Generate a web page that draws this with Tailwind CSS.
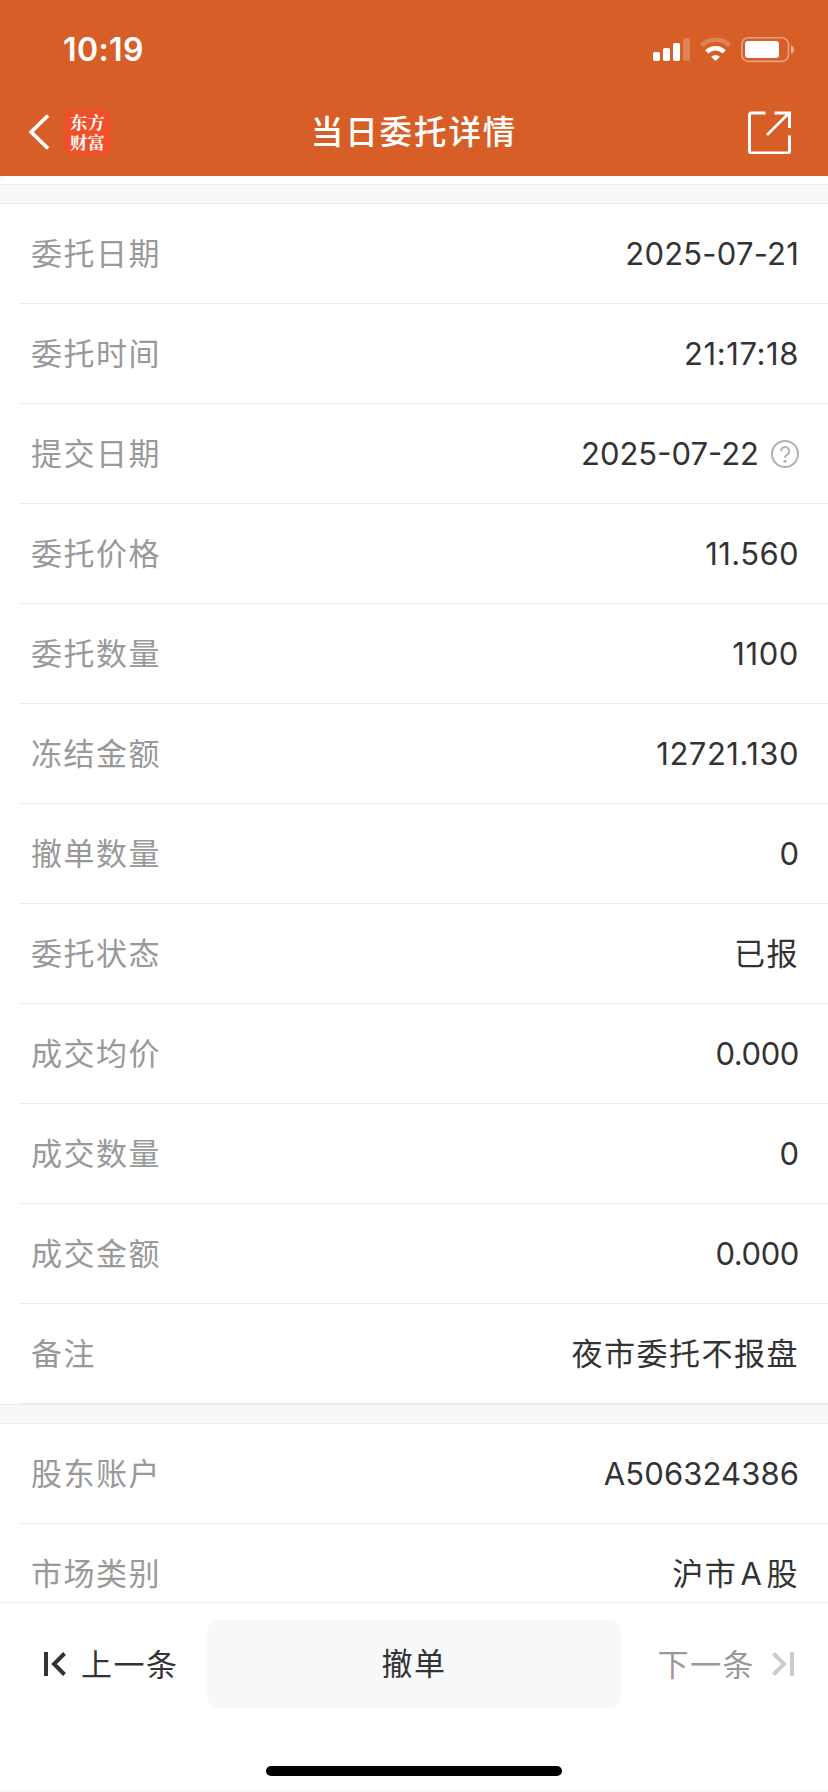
<!DOCTYPE html>
<html lang="zh-CN">
<head>
  <meta charset="UTF-8" />
  <meta name="viewport" content="width=device-width, initial-scale=1.0" />
  <title>当日委托详情</title>
  <script src="https://cdn.jsdelivr.net/npm/@tailwindcss/browser@4"></script>
</head>
<body class="bg-white h-[1792px] flex flex-col overflow-hidden font-[Inter,'Noto_Sans_CJK_SC',sans-serif] text-[#333333]">
  <header class="h-44 shrink-0 bg-[#d75f27] text-white">
    <!-- Status bar -->
    <div class="h-[88px] pt-3 pl-[63px] pr-[33px] flex items-center justify-between">
      <span class="text-[32px] leading-none font-semibold tracking-[0.4px]">10:19</span>
      <svg class="w-[143px] h-[26px]" viewBox="652 37 143 26" fill="white">
        <rect x="653" y="52" width="7" height="9" rx="1.8" />
        <rect x="663" y="48" width="7" height="13" rx="1.8" />
        <rect x="673" y="43" width="7" height="18" rx="1.8" />
        <rect x="683" y="38" width="7" height="23" rx="1.8" opacity=".22" />
        <g fill="none" stroke="white" stroke-width="4.6">
          <path d="M701.4 45.6a20 20 0 0 1 28.2 0" opacity=".22" />
          <path d="M706.8 51.8a12.4 12.4 0 0 1 17.4 0" />
        </g>
        <path d="M715.5 61l-4.4-4.2a6.3 6.3 0 0 1 8.8 0z" />
        <rect x="741.8" y="37.8" width="46.6" height="23.6" rx="6.5" fill="none" stroke="white" stroke-width="1.6" opacity=".42" />
        <rect x="745" y="41" width="34" height="17" rx="3" />
        <path d="M791 45.3q3 1.4 3 4.4t-3 4.4z" opacity=".5" />
      </svg>
    </div>
    <!-- Nav bar -->
    <div class="h-[88px] pl-7 pr-[37px] grid grid-cols-[1fr_auto_1fr] items-center">
      <div class="flex items-center gap-3.5">
        <svg class="w-[22px] h-[36px]" viewBox="0 0 22 36" fill="none" stroke="white" stroke-width="3.8"><path d="M20 1.5L3.2 18 20 34.5" /></svg>
        <div class="w-[47px] h-[47px] rounded-[9px] bg-[#ee5029] text-center pt-[3px] font-['Noto_Serif_CJK_SC','Noto_Sans_CJK_SC',serif] font-bold text-[17.5px] leading-5">东方<br />财富</div>
      </div>
      <h1 class="pt-[3px] pl-[9px] text-[32.5px] leading-none font-medium tracking-[1.9px]">当日委托详情</h1>
      <svg class="w-[43px] h-[43px] justify-self-end" viewBox="0 0 43 43" fill="none" stroke="white" stroke-width="3">
        <path d="M17.5 2H3.5q-2 0-2 2v36q0 2 2 2h36q2 0 2-2V24.5" />
        <path d="M26.500 2H41.500V17" />
        <path d="M19 24L40 3" stroke-width="2.6" />
      </svg>
    </div>
  </header>

  <main class="h-[1426px] shrink-0 overflow-hidden">
    <div class="h-2 bg-[#f7f8fa]"><div class="h-full bg-white rounded-t-md"></div></div>
    <div class="h-5 bg-[#f7f8fa] border-y border-[#ececec]"></div>
    <div id="order-rows"></div>
    <div class="h-5 bg-[#f7f8fa] border-y border-[#ececec]"></div>
    <div id="account-rows"></div>
  </main>

  <footer class="flex-1 flex flex-col border-t border-[#ececec]">
    <div class="h-[122px] pl-[44px] pr-[34px] flex items-center">
      <button class="w-[163px] flex items-center gap-[15px]">
        <svg class="w-[22px] h-6" viewBox="0 0 22 24" fill="none" stroke="#333333" stroke-width="4"><path d="M2 0V24M20.500 1.500L10 12L20.500 22.500" /></svg>
        <span class="text-[31px] leading-none tracking-[1.5px]">上一条</span>
      </button>
      <button class="w-[414px] h-[88px] rounded-[10px] bg-[#f7f8fa] text-[31px] tracking-[1.5px]">撤单</button>
      <button class="flex-1 flex items-center justify-end gap-[17px] text-[#999999]">
        <span class="text-[31px] leading-none tracking-[1.5px]">下一条</span>
        <svg class="w-[22px] h-6" viewBox="0 0 22 24" fill="none" stroke="#cccccc" stroke-width="4"><path d="M20 0V24M1.500 1.500L12 12L1.500 22.500" /></svg>
      </button>
    </div>
    <!-- Home indicator -->
    <div class="mt-[41px] w-[296px] h-2.5 rounded-full bg-black self-center"></div>
    <div class="mt-auto h-0.5 bg-[#f7f7f7]"></div>
  </footer>

  <script>
    const orderRows = [
      ["委托日期", "2025-07-21", "tracking-[0.2px]"],
      ["委托时间", "21:17:18", "tracking-[0.6px]"],
      ["提交日期", "2025-07-22", "tracking-normal", true],
      ["委托价格", "11.560", "tracking-[0.4px]"],
      ["委托数量", "1100", "tracking-[0.6px]"],
      ["冻结金额", "12721.130", "tracking-[0.5px]"],
      ["撤单数量", "0", "tracking-normal"],
      ["委托状态", "已报", "tracking-[1.5px]"],
      ["成交均价", "0.000", "tracking-[-0.4px]"],
      ["成交数量", "0", "tracking-normal"],
      ["成交金额", "0.000", "tracking-[-0.4px]"],
      ["备注", "夜市委托不报盘", "tracking-[1.5px]"],
    ];
    const accountRows = [
      ["股东账户", "A506324386", "tracking-[0.1px]"],
      ["市场类别", "沪市 A 股", "tracking-[1.5px] [word-spacing:-7px]"],
    ];

    const helpIcon = `
      <svg class="w-7 h-7 ml-3" viewBox="0 0 28 28" fill="none" stroke="#b2b2b2" stroke-width="2">
        <circle cx="14" cy="14" r="13" />
        <path d="M9.800 11.200a4.200 4.200 0 1 1 6.500 3.500q-2.300 1.400-2.300 3.300" />
        <circle cx="14" cy="21.300" r="1.500" fill="#b2b2b2" stroke="none" />
      </svg>`;

    function renderRows(id, rows) {
      document.getElementById(id).innerHTML = rows.map(([label, value, tracking, help]) => `
        <div class="h-[100px] ml-5 pl-[11px] pr-[29px] flex items-center justify-between border-b border-[#ececec]">
          <span class="text-[31px] leading-none tracking-[1.5px] text-[#999999]">${label}</span>
          <span class="flex items-center">
            <span class="text-[31px] leading-none ${tracking}">${value}</span>
            ${help ? helpIcon : ""}
          </span>
        </div>`).join("");
    }

    renderRows("order-rows", orderRows);
    renderRows("account-rows", accountRows);
  </script>
</body>
</html>
